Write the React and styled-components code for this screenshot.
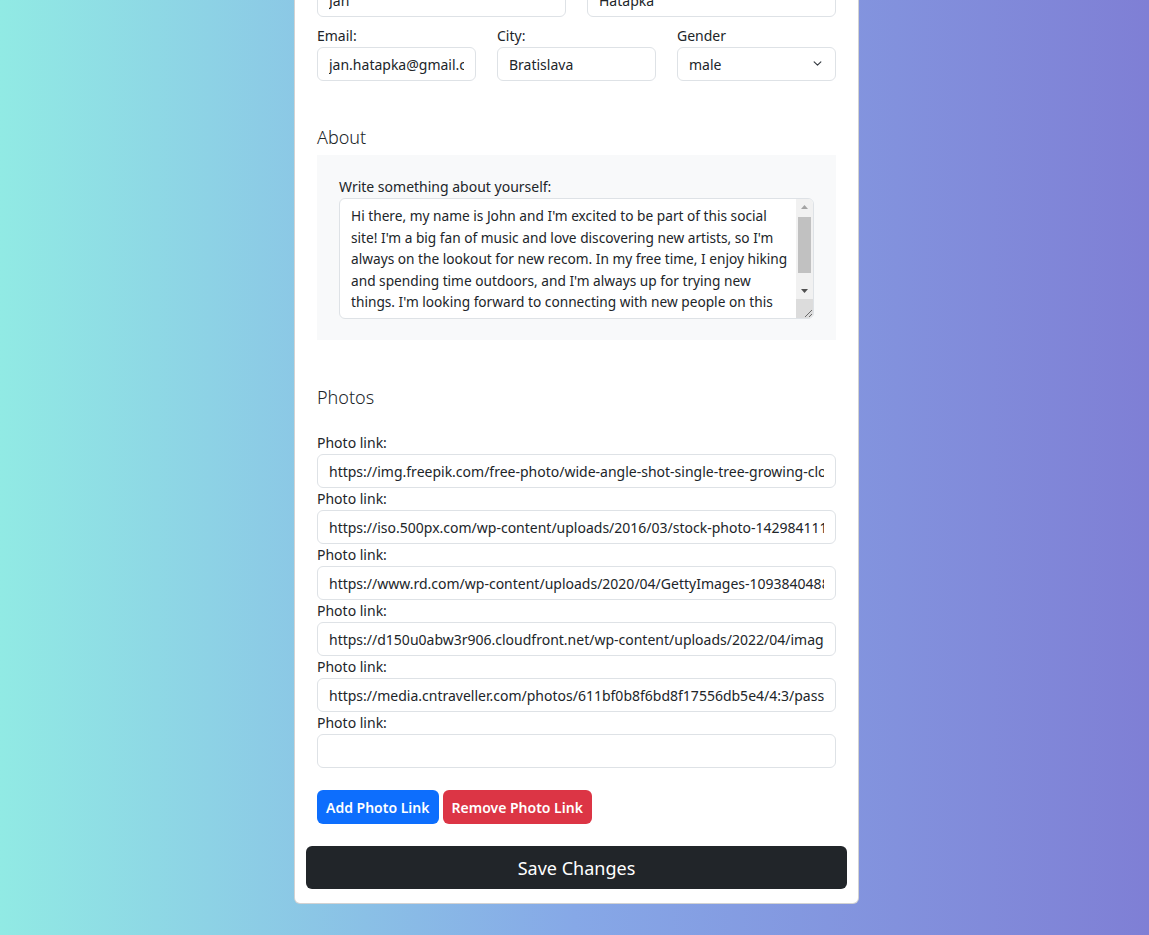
import styled, { createGlobalStyle } from 'styled-components';

const GlobalStyle = createGlobalStyle`
    html, body {
        margin: 0;
        padding: 0;
    }
    body {
        font-family: "Segoe UI", "Noto Sans", "Liberation Sans", sans-serif;
        color: #212529;
        font-size: 14px;
    }
`;

const Page = styled.div`
    min-height: 100vh;
    background: linear-gradient(to right, #91eae4, #86a8e7, #7f7fd5);
    display: flex;
    justify-content: center;
    align-items: flex-start;
    padding-left: 4px;
    box-sizing: border-box;
    overflow: hidden;
`;

const Card = styled.div`
    width: 565px;
    box-sizing: border-box;
    background: #fff;
    border: 1px solid rgba(0, 0, 0, 0.175);
    border-radius: 6px;
    padding: 12px 11px 14px;
    margin-top: -52px;
    margin-bottom: 31px;
`;

const Form = styled.form`
    padding: 0 11px;
`;

const Row = styled.div`
    display: grid;
    grid-template-columns: repeat(${(props) => props.cols}, 1fr);
    column-gap: 21px;
    margin-bottom: 8px;
`;

const Field = styled.div`
    display: flex;
    flex-direction: column;
    min-width: 0;
`;

const Label = styled.label`
    display: block;
    font-size: 14px;
    line-height: 21px;
    margin-bottom: 1px;
`;

const Input = styled.input`
    box-sizing: border-box;
    width: 100%;
    height: 34px;
    padding: 5px 11px;
    font: inherit;
    font-size: 14px;
    color: #212529;
    background: #fff;
    border: 1px solid #dee2e6;
    border-radius: 6px;
    outline: none;
`;

const SelectWrap = styled.div`
    position: relative;
`;

const Select = styled.select`
    box-sizing: border-box;
    width: 100%;
    height: 34px;
    padding: 5px 11px;
    font: inherit;
    font-size: 14px;
    color: #212529;
    background: #fff;
    border: 1px solid #dee2e6;
    border-radius: 6px;
    appearance: none;
    outline: none;
`;

const Chevron = styled.svg`
    position: absolute;
    right: 13px;
    top: 12px;
    pointer-events: none;
`;

const SectionTitle = styled.h5`
    font-size: 18px;
    font-weight: 300;
    line-height: 24px;
    margin: ${(props) => props.top}px 0 ${(props) => props.bottom}px;
`;

const AboutBox = styled.div`
    background: #f8f9fa;
    padding: 21px 22px 21px;
`;

const TextAreaWrap = styled.div`
    position: relative;
`;

const TextArea = styled.textarea`
    box-sizing: border-box;
    display: block;
    width: 100%;
    height: 121px;
    padding: 6px 20px 6px 11px;
    font: inherit;
    font-size: 13.7px;
    line-height: 21.5px;
    color: #212529;
    border: 1px solid #dee2e6;
    border-radius: 6px;
    resize: none;
    outline: none;
    overflow-y: hidden;
`;

/* the textarea's classic scrollbar, drawn over its right edge */
const Scrollbar = styled.div`
    position: absolute;
    top: 1px;
    right: 1px;
    bottom: 1px;
    width: 17px;
    display: flex;
    flex-direction: column;
    background: #f1f1f1;
    border-radius: 0 5px 5px 0;
    overflow: hidden;
    pointer-events: none;
`;

const ScrollArrow = styled.div`
    height: 16px;
    display: flex;
    align-items: center;
    justify-content: center;
    flex: none;
`;

const ScrollTrack = styled.div`
    flex: 1;
    padding: 2px 2px 0;
`;

const ScrollThumb = styled.div`
    height: 56px;
    background: #c1c1c1;
`;

const ScrollCorner = styled.div`
    height: 19px;
    flex: none;
    background: #dcdcdc;
    display: flex;
    align-items: flex-end;
    justify-content: flex-end;
`;

const PhotoList = styled.div`
    display: flex;
    flex-direction: column;
`;

const Buttons = styled.div`
    display: flex;
    gap: 4px;
    margin-top: 22px;
`;

const Button = styled.button`
    height: 34px;
    padding: 0 9px;
    font: inherit;
    font-size: 14px;
    font-weight: 600;
    color: #fff;
    background: ${(props) => (props.danger ? '#dc3545' : '#0d6efd')};
    border: none;
    border-radius: 6px;
`;

const SaveButton = styled.button`
    display: block;
    width: 100%;
    height: 43px;
    margin-top: 22px;
    font: inherit;
    font-size: 18px;
    color: #fff;
    background: #212529;
    border: none;
    border-radius: 6px;
`;

const aboutText =
    "Hi there, my name is John and I'm excited to be part of this social site! I'm a big fan of music and love discovering new artists, so I'm always on the lookout for new recom. In my free time, I enjoy hiking and spending time outdoors, and I'm always up for trying new things. I'm looking forward to connecting with new people on this site and sharing my experiences.";

const photos = [
    'https://img.freepik.com/free-photo/wide-angle-shot-single-tree-growing-clouded-sky-during-sunset-surrounded-by-grass_181624-22807.jpg',
    'https://iso.500px.com/wp-content/uploads/2016/03/stock-photo-142984111-1500x1000.jpg',
    'https://www.rd.com/wp-content/uploads/2020/04/GettyImages-1093840488-5-scaled.jpg',
    'https://d150u0abw3r906.cloudfront.net/wp-content/uploads/2022/04/image2-1.png',
    'https://media.cntraveller.com/photos/611bf0b8f6bd8f17556db5e4/4:3/pass/gettyimages-1146431497.jpg',
    '',
];

const App = () => {
    return (
        <>
            <GlobalStyle />
            <Page>
                <Card>
                    <Form onSubmit={(e) => e.preventDefault()}>
                        <Row cols={2}>
                            <Field>
                                <Label>First name:</Label>
                                <Input defaultValue="Jan" />
                            </Field>
                            <Field>
                                <Label>Last name:</Label>
                                <Input defaultValue="Hatapka" />
                            </Field>
                        </Row>
                        <Row cols={3}>
                            <Field>
                                <Label>Email:</Label>
                                <Input defaultValue="jan.hatapka@gmail.com" />
                            </Field>
                            <Field>
                                <Label>City:</Label>
                                <Input defaultValue="Bratislava" />
                            </Field>
                            <Field>
                                <Label>Gender</Label>
                                <SelectWrap>
                                    <Select defaultValue="male">
                                        <option value="male">male</option>
                                        <option value="female">female</option>
                                    </Select>
                                    <Chevron width="11" height="9" viewBox="0 0 16 16">
                                        <path d="M2 5l6 6 6-6" fill="none" stroke="#343a40" strokeWidth="2" strokeLinecap="round" strokeLinejoin="round" />
                                    </Chevron>
                                </SelectWrap>
                            </Field>
                        </Row>

                        <SectionTitle top={44} bottom={6}>About</SectionTitle>
                        <AboutBox>
                            <Label>Write something about yourself:</Label>
                            <TextAreaWrap>
                                <TextArea defaultValue={aboutText} />
                                <Scrollbar>
                                    <ScrollArrow>
                                        <svg width="7" height="4" viewBox="0 0 7 4">
                                            <path d="M0 4L3.5 0L7 4Z" fill="#a3a3a3" />
                                        </svg>
                                    </ScrollArrow>
                                    <ScrollTrack>
                                        <ScrollThumb />
                                    </ScrollTrack>
                                    <ScrollArrow>
                                        <svg width="7" height="4" viewBox="0 0 7 4">
                                            <path d="M0 0L3.5 4L7 0Z" fill="#505050" />
                                        </svg>
                                    </ScrollArrow>
                                    <ScrollCorner>
                                        <svg width="10" height="10" viewBox="0 0 10 10">
                                            <path d="M9 2L2 9M9 6L6 9" stroke="#6b6b6b" strokeWidth="1" />
                                        </svg>
                                    </ScrollCorner>
                                </Scrollbar>
                            </TextAreaWrap>
                        </AboutBox>

                        <SectionTitle top={45} bottom={23}>Photos</SectionTitle>
                        <PhotoList>
                            {photos.map((url, i) => (
                                <Field key={i}>
                                    <Label>Photo link:</Label>
                                    <Input defaultValue={url} />
                                </Field>
                            ))}
                        </PhotoList>

                        <Buttons>
                            <Button type="button">Add Photo Link</Button>
                            <Button type="button" danger>Remove Photo Link</Button>
                        </Buttons>
                    </Form>
                    <SaveButton type="submit">Save Changes</SaveButton>
                </Card>
            </Page>
        </>
    );
};

export default App;
